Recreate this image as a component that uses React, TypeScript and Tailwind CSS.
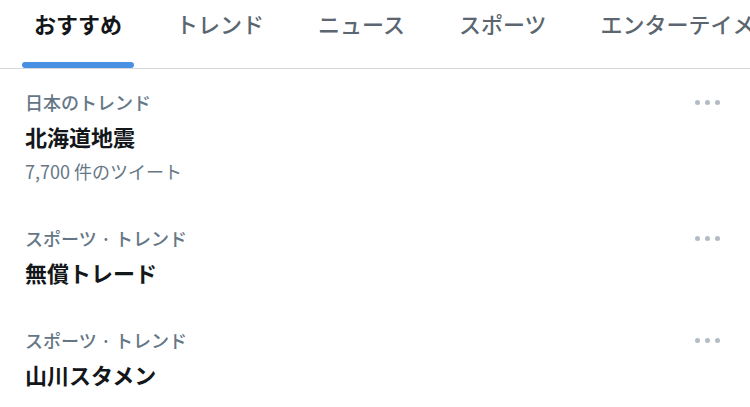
const FONT = "font-['Noto_Sans_CJK_JP','Noto_Sans',sans-serif]"

const TABS = ["おすすめ", "トレンド", "ニュース", "スポーツ", "エンターテイメント"]

type Trend = {
  label: string
  title: string
  count?: string
}

const TRENDS: Trend[] = [
  { label: "日本のトレンド", title: "北海道地震", count: "7,700 件のツイート" },
  { label: "スポーツ · トレンド", title: "無償トレード" },
  { label: "スポーツ · トレンド", title: "山川スタメン" },
]

function MoreDots() {
  return (
    <div className="flex items-center gap-[5px] h-[34px]">
      <span className="w-[5px] h-[5px] rounded-full bg-[#b3bcc4]" />
      <span className="w-[5px] h-[5px] rounded-full bg-[#b3bcc4]" />
      <span className="w-[5px] h-[5px] rounded-full bg-[#b3bcc4]" />
    </div>
  )
}

export default function App() {
  return (
    <div className={`w-[750px] h-[407px] bg-white overflow-hidden ${FONT}`}>
      {/* Tabs */}
      <div className="h-[69px] border-b border-[#d4d8dc] flex pl-[22px] gap-[30px] whitespace-nowrap">
        {TABS.map((tab, i) => (
          <div key={tab} className="flex flex-col h-[68px] shrink-0">
            <div
              className={`px-[12px] h-[46px] leading-[46px] text-[22px] ${
                i === 0 ? "font-bold text-[#14171a]" : "font-medium text-[#5b6671]"
              }`}
            >
              {tab}
            </div>
            <div className="flex-1" />
            <div className={`h-[6px] rounded-full ${i === 0 ? "bg-[#4a90e2]" : ""}`} />
          </div>
        ))}
      </div>

      {/* Trends */}
      <div>
        {TRENDS.map((t, i) => (
          <div key={i} className="flex pl-[25px] pr-[30px] pt-[16px] pb-[17px]">
            <div className="flex-1">
              <div className="text-[18px] leading-[34px] font-medium text-[#657786]">{t.label}</div>
              <div className="text-[22px] leading-[35px] font-bold text-[#14171a]">{t.title}</div>
              {t.count && (
                <div className="text-[18px] leading-[34px] text-[#657786]">{t.count}</div>
              )}
            </div>
            <MoreDots />
          </div>
        ))}
      </div>
    </div>
  )
}
